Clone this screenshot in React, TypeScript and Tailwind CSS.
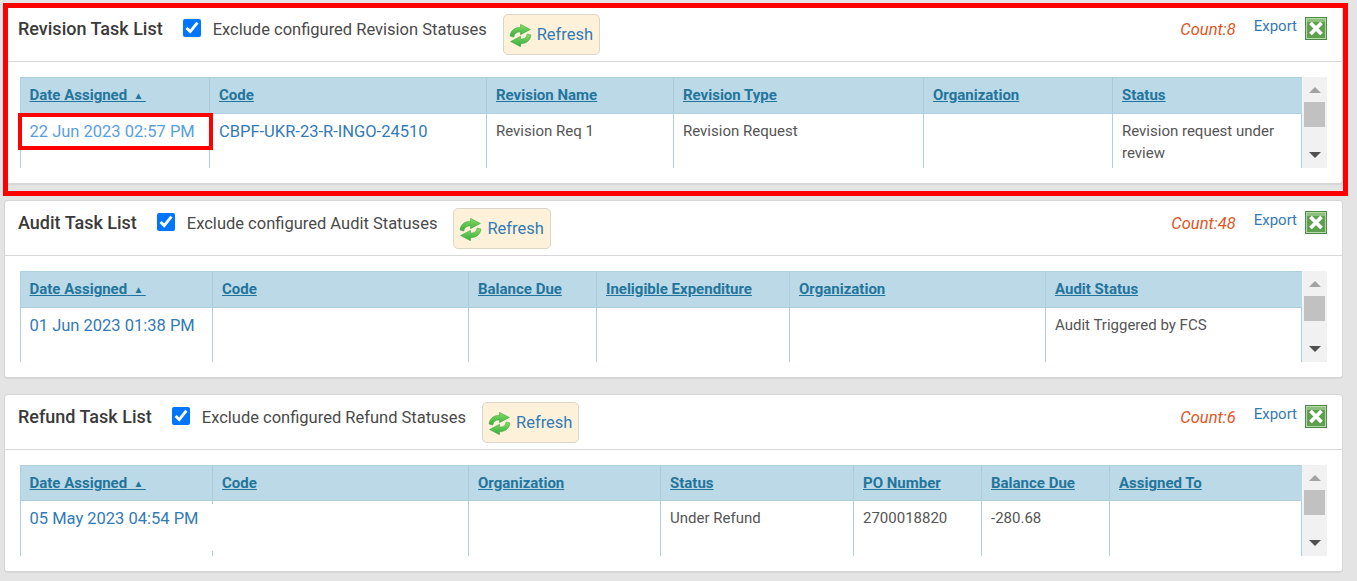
function RefreshIcon() {
  return (
    <svg viewBox="0 0 22 22" className="w-[23px] h-[23px] shrink-0">
      <defs>
        <linearGradient id="refreshGreen" x1="0" y1="0" x2="0" y2="1">
          <stop offset="0" stopColor="#86dc66" />
          <stop offset="1" stopColor="#36ad3e" />
        </linearGradient>
      </defs>
      <path d="M1 11.5C1.5 6 6 3 11 3.2L11 0.3L20.5 5.2L11 10.2L11 7.6C7 7.5 5.5 9 4.5 12.5Z" fill="url(#refreshGreen)" stroke="#3fa03c" strokeWidth="0.5" />
      <path d="M21 10.5C20.5 16 16 19 11 18.8L11 21.7L1.5 16.8L11 11.8L11 14.4C15 14.5 16.5 13 17.5 9.5Z" fill="url(#refreshGreen)" stroke="#3fa03c" strokeWidth="0.5" />
    </svg>
  )
}

function ExcelIcon() {
  return (
    <svg viewBox="0 0 22 23" className="w-[22px] h-[23px] shrink-0">
      <rect x="0.5" y="0.5" width="21" height="22" fill="#b7d9aa" stroke="#4c8b45" />
      <rect x="2" y="2" width="18" height="19" fill="#5f9f50" />
      <rect x="2" y="2" width="18" height="3" fill="#8cc07c" />
      <path d="M5.5 6L16.5 17M16.5 6L5.5 17" stroke="#ffffff" strokeWidth="3.8" />
    </svg>
  )
}

function ScrollBar() {
  return (
    <div className="w-[25px] shrink-0 bg-[#f1f1f1] flex flex-col items-center">
      <div className="h-[25px] flex items-center justify-center">
        <div className="w-0 h-0 border-x-[6px] border-x-transparent border-b-[6px] border-b-[#a3a3a3]" />
      </div>
      <div className="w-[21px] h-[25px] bg-[#c1c1c1]" />
      <div className="flex-1 flex items-end justify-center pb-[10px]">
        <div className="w-0 h-0 border-x-[6px] border-x-transparent border-t-[6px] border-t-[#505050]" />
      </div>
    </div>
  )
}

interface TaskCardProps {
  title: string
  exclude: string
  count: string
  gridClass: string
  headClass?: string
  bodyClass?: string
  headers: string[]
  cells: string[]
  date: string
  dateClass?: string
  code?: string
  dateHidesBorder?: boolean
}

function TaskCard({ title, exclude, count, gridClass, headClass, bodyClass, headers, cells, date, dateClass, code, dateHidesBorder }: TaskCardProps) {
  return (
    <section className="h-[179px] mx-[4px] w-[1339px] bg-white rounded-[4px] border border-[#d6d6d6] border-b-2">
      <div className="h-[55px] border-b border-[#d8d8d8] pl-[13px] pr-[15px] flex items-start">
        <h2 className="text-[18px] leading-[24px] font-medium text-[#3a3a3a] mt-[10px] mr-[20px]">{title}</h2>
        <input type="checkbox" readOnly checked className="w-[18px] h-[18px] mt-[12px] accent-[#0075ff] shrink-0" />
        <span className="ml-[12px] mt-[11px] text-[16.5px] leading-[24px] text-[#4a4a4a] whitespace-nowrap">{exclude}</span>
        <button className="ml-[16px] mt-[7px] h-[41px] pl-[5px] pr-[6px] pt-[1px] flex items-center gap-[5px] bg-[#fdf2d9] border border-[#dcd6c8] rounded-[5px] text-[16.5px] text-[#337ab7]">
          <RefreshIcon />
          Refresh
        </button>
        <span className="ml-auto mt-[11px] text-[16.5px] leading-[24px] italic text-[#e0561f]">{count}</span>
        <a className="ml-[18px] mt-[7px] text-[15px] leading-[24px] text-[#337ab7]">Export</a>
        <span className="ml-[8px] mt-[10px]">
          <ExcelIcon />
        </span>
      </div>
      <div className="flex mt-[15px] mx-[15px] h-[91px]">
        <div className="w-[1282px]">
          <div className={`grid ${gridClass} ${headClass ?? "h-[37px]"} bg-[#bcd9e8] border-y border-[#aecfdf] text-[15px] leading-[22px] font-bold`}>
            {headers.map((h, i) => (
              <div key={h} className={i > 0 ? "pl-[9px] pt-[6px] border-l border-[#aecbdc]" : "pl-[8.5px] pt-[6px] border-l border-[#aecfdf]"}>
                <a className="underline text-[#23759c] whitespace-nowrap">
                  {h}
                  {i === 0 && (
                    <>
                      &nbsp;<span className="text-[10px] align-[1px]">&nbsp;▲&nbsp;</span>
                    </>
                  )}
                </a>
              </div>
            ))}
          </div>
          <div className={`grid ${gridClass} ${bodyClass ?? "h-[54px]"} border-r border-[#aecfdf] text-[15px] leading-[22px] text-[#555555]`}>
            <div className={`pl-[8.5px] pt-[7px] border-l border-[#aecfdf] text-[16.5px] leading-[22px] whitespace-nowrap ${dateClass ?? "text-[#337ab7]"}`}>{date}</div>
            <div className={`pl-[6px] pt-[7px] relative ${dateHidesBorder ? "" : "border-l border-[#aecfdf]"}`}>
              {dateHidesBorder && (
                <>
                  <span className="absolute left-0 top-0 h-[3px] border-l border-[#aecfdf]" />
                  <span className="absolute left-0 bottom-0 h-[5px] border-l border-[#aecfdf]" />
                </>
              )}
              {code && <a className="block text-[16.5px] text-[#337ab7] whitespace-nowrap pl-[3px]">{code}</a>}
            </div>
            {cells.map((c, i) => (
              <div key={i} className="pl-[9px] pr-[6px] pt-[6px] border-l border-[#aecfdf]">{c}</div>
            ))}
          </div>
        </div>
        <ScrollBar />
      </div>
    </section>
  )
}

export default function App() {
  return (
    <div className="relative h-[581px] overflow-hidden bg-[#e4e4e4] pt-[6px] flex flex-col gap-[15px] font-['Roboto',sans-serif]">
      <TaskCard
        title="Revision Task List"
        exclude="Exclude configured Revision Statuses"
        count="Count:8"
        gridClass="grid-cols-[189px_277px_187px_250px_189px_190px]"
        headers={["Date Assigned", "Code", "Revision Name", "Revision Type", "Organization", "Status"]}
        date="22 Jun 2023 02:57 PM"
        dateClass="text-[#5a9ee0]"
        code="CBPF-UKR-23-R-INGO-24510"
        cells={["Revision Req 1", "Revision Request", "", "Revision request under review"]}
      />
      <TaskCard
        title="Audit Task List"
        exclude="Exclude configured Audit Statuses"
        count="Count:48"
        gridClass="grid-cols-[192px_256px_128px_193px_256px_257px]"
        headers={["Date Assigned", "Code", "Balance Due", "Ineligible Expenditure", "Organization", "Audit Status"]}
        date="01 Jun 2023 01:38 PM"
        cells={["", "", "", "Audit Triggered by FCS"]}
      />
      <TaskCard
        title="Refund Task List"
        exclude="Exclude configured Refund Statuses"
        count="Count:6"
        gridClass="grid-cols-[192px_256px_192px_193px_128px_128px_193px]"
        headClass="h-[36px]"
        bodyClass="h-[55px]"
        headers={["Date Assigned", "Code", "Organization", "Status", "PO Number", "Balance Due", "Assigned To"]}
        date="05 May 2023 04:54 PM"
        dateHidesBorder
        cells={["", "Under Refund", "2700018820", "-280.68", ""]}
      />
      {/* red annotation boxes drawn on top of the screenshot */}
      <div className="absolute left-[3px] top-[3px] w-[1345px] h-[193px] border-[5px] border-[#ff0000] pointer-events-none" />
      <div className="absolute left-[18px] top-[113px] w-[195px] h-[37px] border-[4px] border-[#ff0000] pointer-events-none" />
    </div>
  )
}
